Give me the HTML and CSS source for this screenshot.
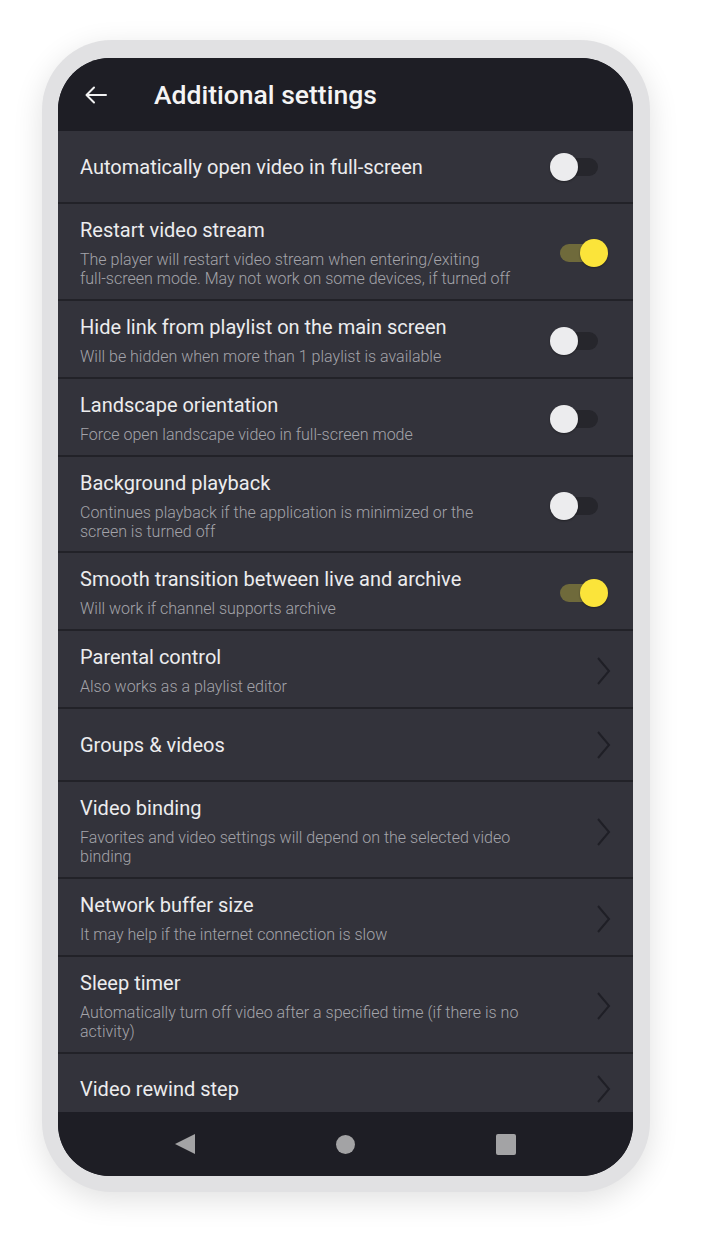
FILE: index.html
```html
<!DOCTYPE html>
<html lang="en">
<head>
    <meta charset="UTF-8">
    <meta name="viewport" content="width=device-width, initial-scale=1.0">
    <title>Additional settings</title>
    <link rel="stylesheet" href="styles.css">
</head>
<body>

    <div class="phone">
        <div class="screen">
            <header class="topbar">
                <svg class="back-icon" width="24" height="24" viewBox="0 0 24 24">
                    <path d="M22 12H3 M10 4.5L2.5 12L10 19.5" fill="none" stroke="#f2f2f2" stroke-width="2" stroke-linecap="round" stroke-linejoin="round"/>
                </svg>
                <h1>Additional settings</h1>
            </header>

            <div class="list">
                <div class="row single">
                    <div class="row-text">
                        <p class="title">Automatically open video in full-screen</p>
                    </div>
                    <div class="switch"><span class="track"></span><span class="knob"></span></div>
                </div>

                <div class="row">
                    <div class="row-text">
                        <p class="title">Restart video stream</p>
                        <p class="desc">The player will restart video stream when entering/exiting <span class="nowrap">full-screen</span> mode. May not work on some devices, if turned off</p>
                    </div>
                    <div class="switch on"><span class="track"></span><span class="knob"></span></div>
                </div>

                <div class="row">
                    <div class="row-text">
                        <p class="title">Hide link from playlist on the main screen</p>
                        <p class="desc">Will be hidden when more than 1 playlist is available</p>
                    </div>
                    <div class="switch"><span class="track"></span><span class="knob"></span></div>
                </div>

                <div class="row">
                    <div class="row-text">
                        <p class="title">Landscape orientation</p>
                        <p class="desc">Force open landscape video in full-screen mode</p>
                    </div>
                    <div class="switch"><span class="track"></span><span class="knob"></span></div>
                </div>

                <div class="row">
                    <div class="row-text">
                        <p class="title">Background playback</p>
                        <p class="desc">Continues playback if the application is minimized or the screen is turned off</p>
                    </div>
                    <div class="switch"><span class="track"></span><span class="knob"></span></div>
                </div>

                <div class="row">
                    <div class="row-text">
                        <p class="title">Smooth transition between live and archive</p>
                        <p class="desc">Will work if channel supports archive</p>
                    </div>
                    <div class="switch on"><span class="track"></span><span class="knob"></span></div>
                </div>

                <div class="row">
                    <div class="row-text">
                        <p class="title">Parental control</p>
                        <p class="desc">Also works as a playlist editor</p>
                    </div>
                    <svg class="chevron" width="16" height="30" viewBox="0 0 16 30"><path d="M3 2L14 15L3 28" fill="none" stroke="#1f1f26" stroke-width="2"/></svg>
                </div>

                <div class="row single">
                    <div class="row-text">
                        <p class="title">Groups &amp; videos</p>
                    </div>
                    <svg class="chevron" width="16" height="30" viewBox="0 0 16 30"><path d="M3 2L14 15L3 28" fill="none" stroke="#1f1f26" stroke-width="2"/></svg>
                </div>

                <div class="row">
                    <div class="row-text">
                        <p class="title">Video binding</p>
                        <p class="desc">Favorites and video settings will depend on the selected video binding</p>
                    </div>
                    <svg class="chevron" width="16" height="30" viewBox="0 0 16 30"><path d="M3 2L14 15L3 28" fill="none" stroke="#1f1f26" stroke-width="2"/></svg>
                </div>

                <div class="row">
                    <div class="row-text">
                        <p class="title">Network buffer size</p>
                        <p class="desc">It may help if the internet connection is slow</p>
                    </div>
                    <svg class="chevron" width="16" height="30" viewBox="0 0 16 30"><path d="M3 2L14 15L3 28" fill="none" stroke="#1f1f26" stroke-width="2"/></svg>
                </div>

                <div class="row">
                    <div class="row-text">
                        <p class="title">Sleep timer</p>
                        <p class="desc">Automatically turn off video after a specified time (if there is no activity)</p>
                    </div>
                    <svg class="chevron" width="16" height="30" viewBox="0 0 16 30"><path d="M3 2L14 15L3 28" fill="none" stroke="#1f1f26" stroke-width="2"/></svg>
                </div>

                <div class="row single">
                    <div class="row-text">
                        <p class="title">Video rewind step</p>
                    </div>
                    <svg class="chevron" width="16" height="30" viewBox="0 0 16 30"><path d="M3 2L14 15L3 28" fill="none" stroke="#1f1f26" stroke-width="2"/></svg>
                </div>
            </div>

            <nav class="navbar">
                <span class="nav-back"></span>
                <span class="nav-home"></span>
                <span class="nav-recent"></span>
            </nav>
        </div>
    </div>

</body>
</html>
```

FILE: styles.css
```css
* {
    margin: 0;
    padding: 0;
    box-sizing: border-box;
}

body {
    font-family: Roboto, 'Noto Sans', sans-serif;
    background-color: #fff;
    min-height: 100vh;
}

.phone {
    width: 608px;
    margin: 40px 0 0 42px;
    padding: 18px 17px 16px 16px;
    background-color: #e1e1e3;
    border-radius: 70px;
    box-shadow: 0 8px 30px rgba(0, 0, 0, 0.12);
}

.screen {
    height: 1118px;
    border-radius: 52px;
    overflow: hidden;
    display: flex;
    flex-direction: column;
    background-color: #1e1e25;
}

.topbar {
    height: 73px;
    flex-shrink: 0;
    display: flex;
    align-items: center;
    padding-left: 26px;
    gap: 46px;
    background-color: #1e1e25;
}

.topbar h1 {
    font-size: 26.5px;
    font-weight: 500;
    color: #f4f4f4;
}

.list {
    flex: 1;
    overflow: hidden;
}

.row {
    display: flex;
    align-items: center;
    min-height: 73px;
    padding: 14px 22px 10px 22px;
    background-color: #33333b;
    border-bottom: 2px solid #222228;
}

.row.single {
    padding: 12px 22px;
}

.row-text {
    flex: 1;
    max-width: 442px;
    margin-right: auto;
}

.title {
    font-size: 20px;
    line-height: 24px;
    color: #ececee;
}

.desc {
    margin-top: 9px;
    font-size: 16px;
    line-height: 18.9px;
    font-weight: 300;
    color: #a4a4aa;
}

.nowrap {
    white-space: nowrap;
}

/* toggle switch */
.switch {
    position: relative;
    width: 58px;
    height: 28px;
    margin-right: 3px;
    flex-shrink: 0;
}

.switch .track {
    position: absolute;
    left: 10px;
    top: 5px;
    width: 38px;
    height: 18px;
    border-radius: 9px;
    background-color: #26262c;
}

.switch .knob {
    position: absolute;
    left: 0;
    top: 0;
    width: 28px;
    height: 28px;
    border-radius: 50%;
    background-color: #ececee;
    box-shadow: 0 1px 2px rgba(0, 0, 0, 0.35);
}

.switch.on .track {
    background-color: #6f6a3b;
}

.switch.on .knob {
    left: auto;
    right: 0;
    background-color: #fbe43a;
}

.chevron {
    flex-shrink: 0;
}

.navbar {
    height: 64px;
    flex-shrink: 0;
    display: flex;
    align-items: center;
    justify-content: center;
    gap: 141px;
    padding-right: 1px;
    background-color: #1e1e25;
}

.nav-back {
    width: 0;
    height: 0;
    border-top: 10.5px solid transparent;
    border-bottom: 10.5px solid transparent;
    border-right: 20px solid #a3a3a5;
}

.nav-home {
    width: 19px;
    height: 19px;
    border-radius: 50%;
    background-color: #a3a3a5;
}

.nav-recent {
    width: 20px;
    height: 21px;
    border-radius: 2px;
    background-color: #a3a3a5;
}
```
